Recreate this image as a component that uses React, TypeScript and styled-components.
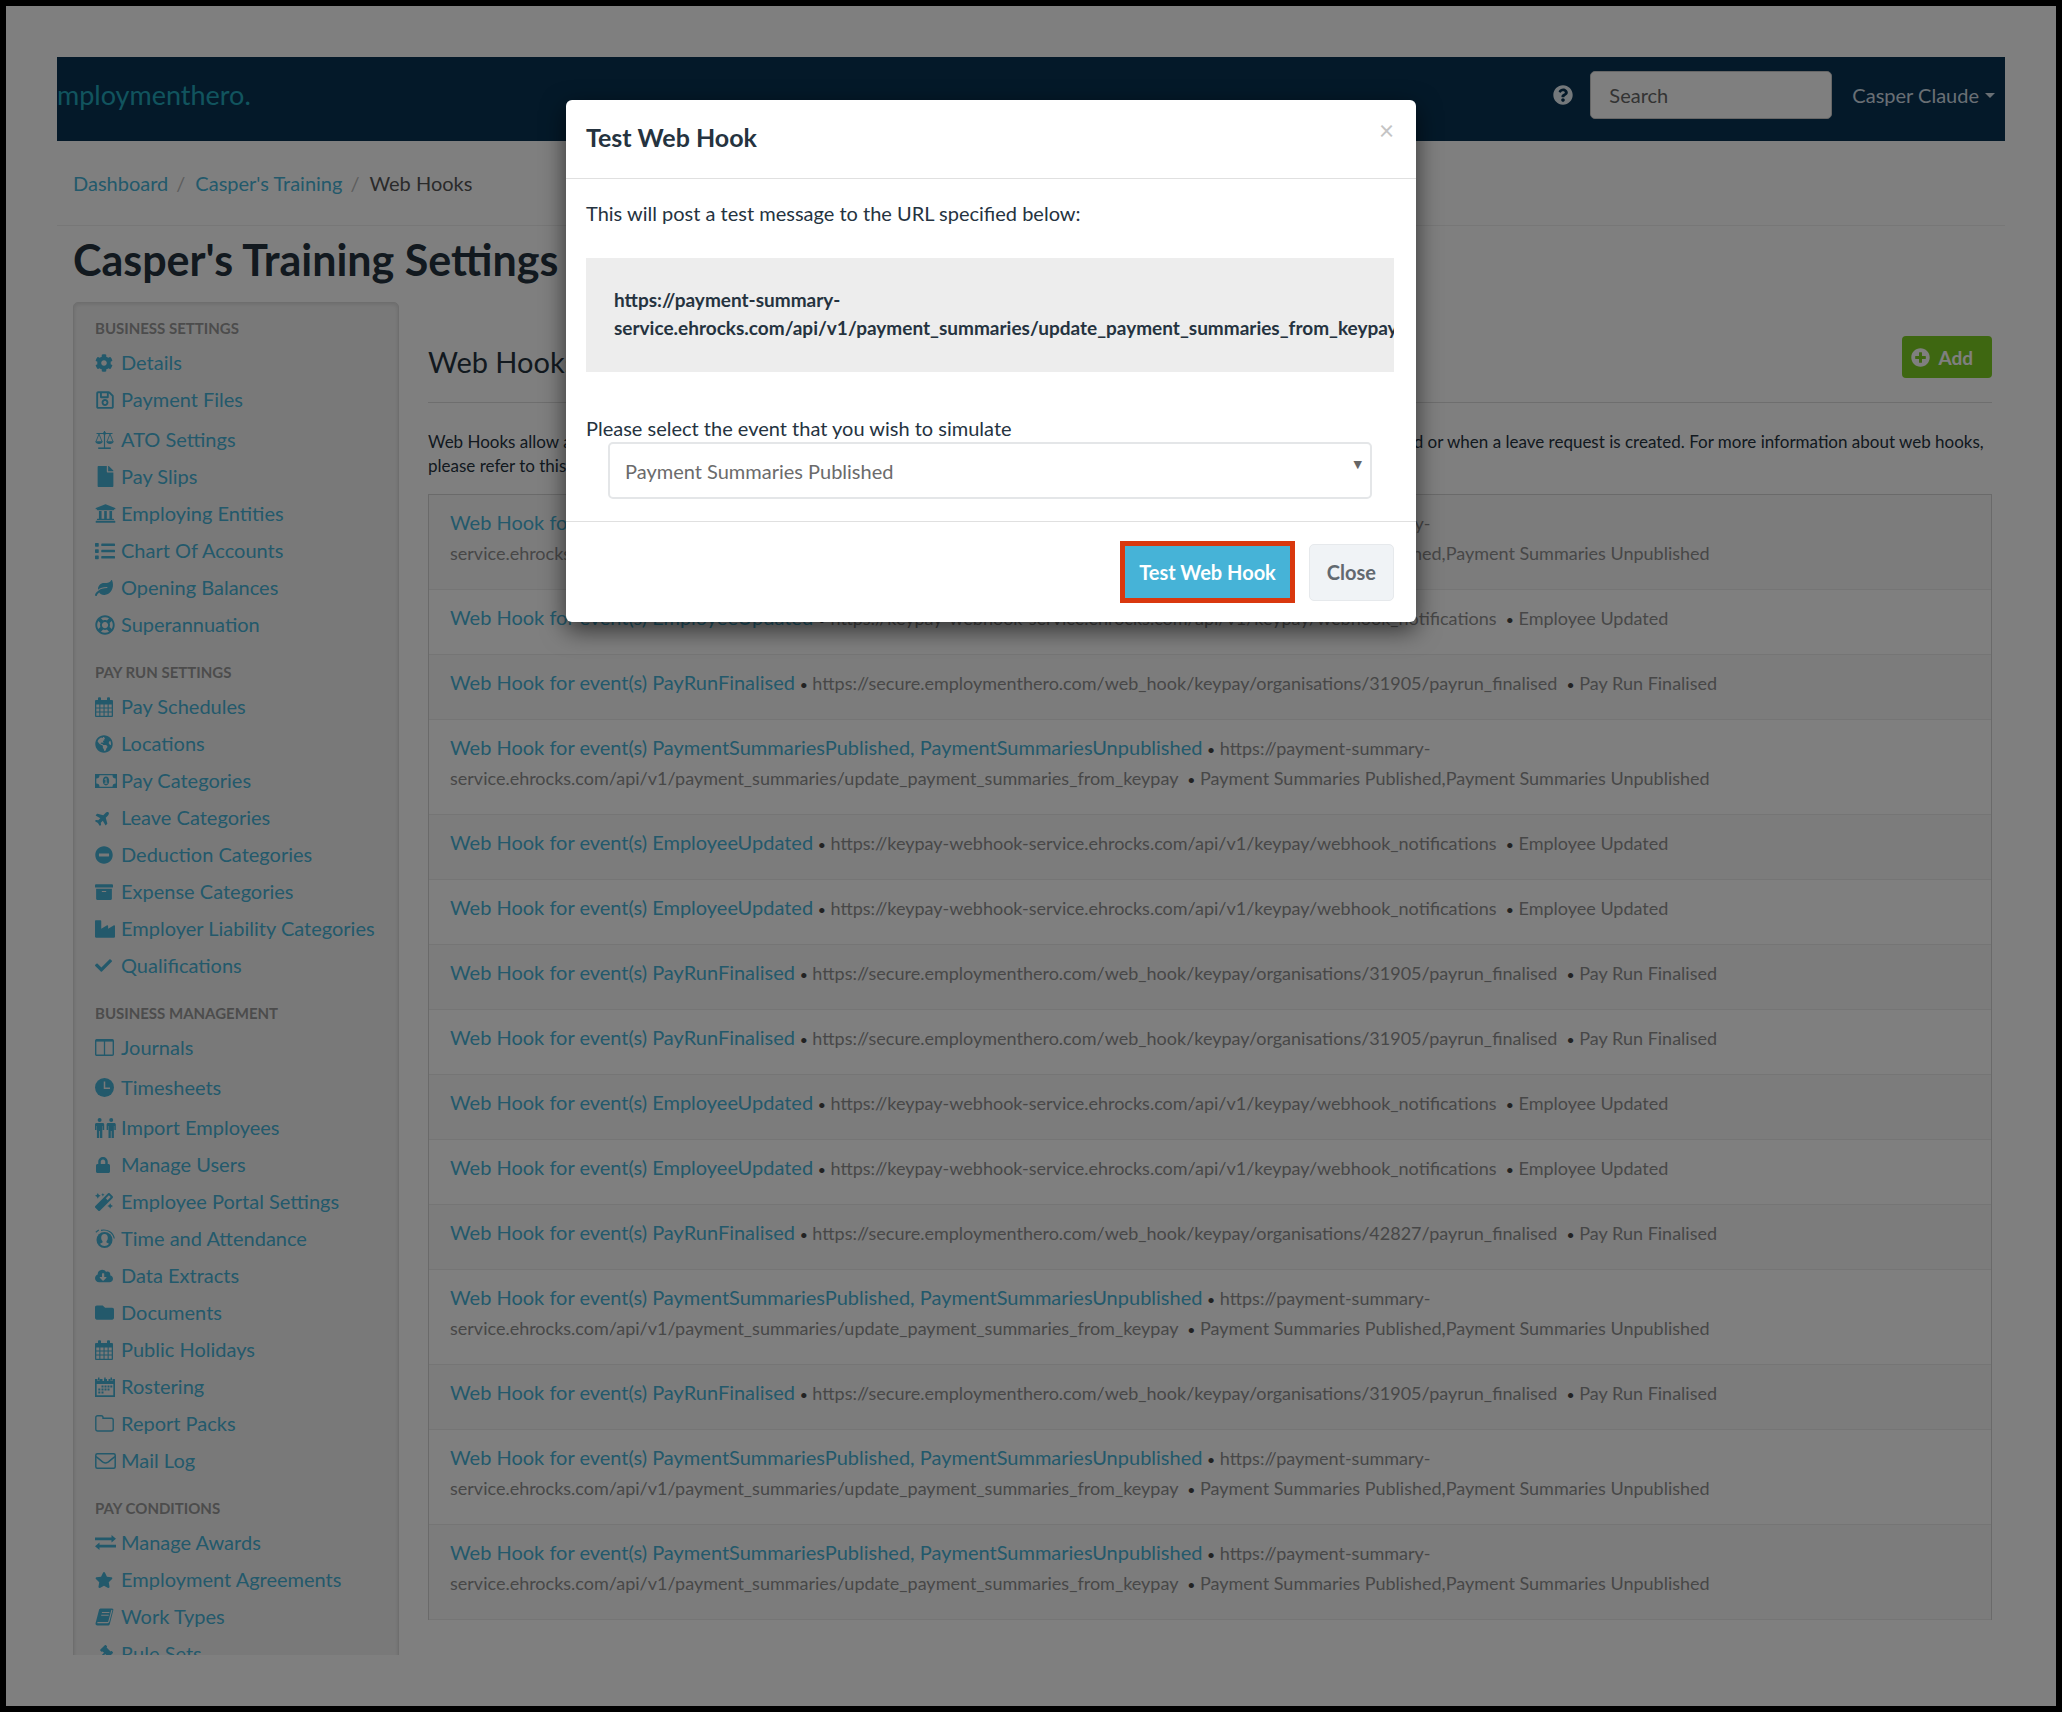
import React from "react";
import styled, { createGlobalStyle, css } from "styled-components";
import {
  FaCog,
  FaRegSave,
  FaFile,
  FaUniversity,
  FaList,
  FaLeaf,
  FaRegLifeRing,
  FaGlobeAmericas,
  FaPlane,
  FaMinusCircle,
  FaArchive,
  FaIndustry,
  FaCheck,
  FaLock,
  FaMagic,
  FaCloudDownloadAlt,
  FaFolder,
  FaStar,
  FaGavel,
  FaQuestionCircle,
  FaPlusCircle,
} from "react-icons/fa";

const color = {
  link: "#46b3d7",
  navy: "#083253",
  ink: "#25333f",
  muted: "#8f8f8f",
  line: "#e0e0e0",
  soft: "#f3f3f3",
};

const Global = createGlobalStyle`
  *, *::before, *::after { box-sizing: border-box; }
  body {
    margin: 0;
    background: #000;
    color: ${color.ink};
    font-family: Lato, "Open Sans", sans-serif;
    font-size: 18px;
  }
  h1, h2, h3, p, ul, ol { margin: 0; padding: 0; }
  ul, ol { list-style: none; }
  a { color: ${color.link}; text-decoration: none; }
  button, input, select { font: inherit; }
`;

const Screen = styled.div`
  position: relative;
  height: 100vh;
  border: 6px solid #000;
  padding: 51px;
  background: #fff;
  overflow: hidden;
`;

const Page = styled.div`
  height: 100%;
  overflow: hidden;
`;

const TopBar = styled.header`
  display: flex;
  align-items: center;
  height: 84px;
  padding: 0 10px 8px 0;
  background: ${color.navy};
`;

const Logo = styled.a`
  margin-right: auto;
  font-size: 27px;
  line-height: 32px;
  color: #22a9bd;
`;

const HelpLink = styled.a`
  display: flex;
  margin-right: 17px;
  color: #e8f1f6;
  font-size: 20px;
`;

const SearchBox = styled.input`
  width: 242px;
  height: 48px;
  margin-right: 20px;
  padding: 0 18px;
  border: 1px solid #ccc;
  border-radius: 5px;
  background: #fff;
  color: #555;
  font-size: 20px;
  &::placeholder {
    color: #666;
    opacity: 1;
  }
`;

const UserMenu = styled.button`
  display: flex;
  align-items: center;
  gap: 6px;
  padding: 0;
  border: 0;
  background: none;
  color: #d3dfe8;
  font-size: 20px;
  line-height: 24px;
`;

const Caret = styled.span`
  border: 5px solid transparent;
  border-top-color: currentColor;
  border-bottom: 0;
`;

const Crumbs = styled.ol`
  display: flex;
  padding: 0 16px;
  border-bottom: 1px solid #eee;
  font-size: 20px;
  line-height: 84px;
  color: #555;
  li + li::before {
    content: "/";
    padding: 0 10px 0 8px;
    color: #bbb;
  }
`;

const PageTitle = styled.h1`
  padding: 10px 16px 18px;
  font-size: 43px;
  font-weight: 700;
  line-height: 48px;
`;

const Columns = styled.div`
  display: grid;
  grid-template-columns: 326px minmax(0, 1fr);
  gap: 29px;
  padding: 0 13px 0 16px;
`;

const Sidebar = styled.nav`
  padding: 10px 21px 20px;
  border: 1px solid #dcdcdc;
  border-radius: 5px;
  background: ${color.soft};
  box-shadow: inset 0 1px 4px rgba(0, 0, 0, 0.12);
`;

const Group = styled.section`
  & + & {
    margin-top: 14px;
  }
`;

const GroupTitle = styled.h3`
  font-size: 15px;
  font-weight: 700;
  line-height: 31px;
  color: #999;
  text-transform: uppercase;
`;

const NavItem = styled.a<{ $tall?: boolean }>`
  display: grid;
  grid-template-columns: 26px 1fr;
  align-items: center;
  padding-top: ${(p) => (p.$tall ? 3 : 0)}px;
  font-size: 20px;
  line-height: 37px;
  white-space: nowrap;
`;

const IconSlot = styled.span<{ $h: number; $turn?: number }>`
  display: flex;
  svg {
    width: auto;
    height: ${(p) => p.$h}px;
    ${(p) =>
      p.$turn &&
      css`
        transform: rotate(${p.$turn}deg);
      `}
  }
`;

const Main = styled.main`
  padding-top: 34px;
`;

const SectionHead = styled.div`
  display: flex;
  align-items: flex-end;
  justify-content: space-between;
  padding-bottom: 24px;
  border-bottom: 1px solid #ddd;
`;

const SectionTitle = styled.h2`
  font-size: 29px;
  font-weight: 400;
  line-height: 32px;
`;

const AddButton = styled.button`
  display: flex;
  align-items: center;
  gap: 8px;
  height: 42px;
  padding: 0 19px 0 9px;
  border: 0;
  border-radius: 4px;
  background: #7dcf22;
  color: #fff;
  font-size: 19px;
  font-weight: 700;
`;

const Intro = styled.p`
  margin: 27px 0 16px;
  font-size: 17px;
  line-height: 24px;
`;

const HookList = styled.ul`
  border: 1px solid #d4d4d4;
  border-bottom: 0;
`;

const HookRow = styled.li`
  padding: 13px 21px 21px;
  border-bottom: 1px solid #ebebeb;
  font-size: 18px;
  line-height: 30px;
  color: ${color.muted};
  &:nth-child(odd) {
    background: #f9f9f9;
  }
`;

const HookLink = styled.a`
  font-size: 20px;
  line-height: 24px;
`;

const Dot = styled.span`
  font-size: 14px;
  line-height: 16px;
  color: #444;
`;

const Backdrop = styled.div`
  position: absolute;
  inset: 0;
  display: flex;
  align-items: flex-start;
  justify-content: center;
  padding: 94px 80px 0 0;
  background: rgba(0, 0, 0, 0.5);
`;

const Modal = styled.div`
  width: 850px;
  max-width: 100%;
  border-radius: 6px;
  background: #fff;
  box-shadow: 0 8px 24px rgba(0, 0, 0, 0.6);
`;

const ModalHead = styled.div`
  display: flex;
  align-items: flex-start;
  justify-content: space-between;
  padding: 19px 22px 23px 20px;
  border-bottom: 1px solid ${color.line};
`;

const ModalTitle = styled.h2`
  font-size: 25px;
  font-weight: 700;
  line-height: 36px;
`;

const CloseX = styled.button`
  padding: 0;
  border: 0;
  background: none;
  color: #c4c4c4;
  font-size: 26px;
  line-height: 22px;
`;

const ModalBody = styled.div`
  padding: 20px 22px 22px 20px;
  border-bottom: 1px solid ${color.line};
  font-size: 20px;
  line-height: 28px;
`;

const UrlBox = styled.div`
  margin: 31px 0 42px;
  padding: 28px 0 30px 28px;
  background: #ededed;
  font-size: 19px;
  font-weight: 700;
  overflow: hidden;
`;

const FieldLabel = styled.label`
  display: block;
`;

const SelectWrap = styled.div`
  display: grid;
  margin: 0 22px;
  &::after {
    content: "▼";
    grid-area: 1 / 1;
    justify-self: end;
    padding: 9px 10px 0 0;
    font-family: "DejaVu Sans", sans-serif;
    font-size: 11px;
    color: #666;
    pointer-events: none;
  }
`;

const EventSelect = styled.select`
  grid-area: 1 / 1;
  height: 57px;
  padding: 0 15px;
  appearance: none;
  border: 2px solid #e4e6e8;
  border-radius: 5px;
  background: #fff;
  color: #6b6b6b;
`;

const ModalFoot = styled.div`
  display: flex;
  align-items: center;
  justify-content: flex-end;
  gap: 14px;
  padding: 19px 22px;
`;

const Action = styled.button<{ $primary?: boolean }>`
  font-size: 20px;
  font-weight: 700;
  line-height: 24px;
  ${(p) =>
    p.$primary
      ? css`
          height: 62px;
          padding: 0 14px;
          border: 5px solid #d9380e;
          background: #46b3d7;
          color: #fff;
        `
      : css`
          height: 57px;
          padding: 0 17px;
          border: 1px solid #e6e9ec;
          border-radius: 5px;
          background: #f0f3f6;
          color: #626970;
        `}
`;

const Scales = () => (
  <svg viewBox="0 0 19 18" fill="none" stroke="currentColor" strokeWidth="1.200">
    <path d="M9.500 0v17M1.500 2.500h16" />
    <path d="M3.200 17.200h12.600" strokeWidth="1.600" />
    <path d="M4 3L1 10.500M4 3l3 7.500M15 3l-3 7.500M15 3l3 7.500" strokeWidth=".9" />
    <path d="M.3 10.300h7.400c-.2 1.700-1.700 2.600-3.700 2.600S.5 12 .3 10.300zM11.300 10.300h7.400c-.2 1.700-1.700 2.600-3.700 2.600s-3.500-.9-3.700-2.600z" fill="currentColor" stroke="none" />
    <circle cx="9.500" cy="2.300" r="1.500" fill="currentColor" stroke="none" />
  </svg>
);

const Calendar = () => (
  <svg viewBox="0 0 18 20" fill="currentColor" fillRule="evenodd">
    <path d="M1 3h2V1.200a1 1 0 0 1 1-1h1a1 1 0 0 1 1 1V3h6V1.200a1 1 0 0 1 1-1h1a1 1 0 0 1 1 1V3h2a1 1 0 0 1 1 1v15a1 1 0 0 1-1 1H1a1 1 0 0 1-1-1V4a1 1 0 0 1 1-1zM1.300 7.500v3h3v-3zm4.100 0v3h3.100v-3zm4.200 0v3h3v-3zm4.100 0v3h3v-3zM1.300 11.500v3h3v-3zm4.100 0v3h3.100v-3zm4.200 0v3h3v-3zm4.100 0v3h3v-3zM1.300 15.600v3.100h3v-3.100zm4.100 0v3.100h3.100v-3.100zm4.200 0v3.100h3v-3.100zm4.100 0v3.100h3v-3.100z" />
  </svg>
);

const Roster = () => (
  <svg viewBox="0 0 20 20" fill="currentColor" fillRule="evenodd">
    <path d="M0 2h2.500v2h2V2h3v2h1.500V2h3v2h1.500V2h2v2h2V2H20v18H0zM1.700 7v11.300h16.600V7z" />
    <path d="M3 .5h1.500v3H3zM9.200.5h1.500v3H9.200zM15.500.5H17v3h-1.500zM6.500 8.500h2v2h-2zM9.500 8.500h2v2h-2zM12.500 8.500h2v2h-2zM15.300 8.500h2v2h-2zM3.300 11.500h2v2h-2zM6.500 11.500h2v2h-2zM9.500 11.500h2v2h-2zM12.500 11.500h2v2h-2zM3.300 14.500h2v2h-2zM6.500 14.500h2v2h-2z" />
  </svg>
);

const Money = () => (
  <svg viewBox="0 0 22 14" fill="currentColor" fillRule="evenodd">
    <path d="M0 0h22v14H0zM4.500 1.300A3.200 3.200 0 0 1 1.300 4.500v5a3.200 3.200 0 0 1 3.200 3.200h13a3.200 3.200 0 0 1 3.200-3.200v-5a3.200 3.200 0 0 1-3.200-3.200z" />
    <path d="M11 2.600c2 0 3.200 2 3.200 4.400s-1.200 4.400-3.200 4.400S7.800 9.400 7.800 7 9 2.600 11 2.600zM9.300 5.300l.6.700.6-.4v3.200h-1v1h3v-1h-.9V4.200h-.9z" />
  </svg>
);

const Panels = () => (
  <svg viewBox="0 0 19 17" fill="none" stroke="currentColor">
    <rect x=".7" y=".7" width="17.600" height="15.600" rx="1" strokeWidth="1.400" />
    <path d="M1 1.500h17" strokeWidth="2.200" />
    <path d="M9.500 2v14" strokeWidth="1.300" />
  </svg>
);

const Clock = () => (
  <svg viewBox="0 0 19 19">
    <circle cx="9.500" cy="9.500" r="9.500" fill="currentColor" />
    <path d="M9.500 3.500v6.700h5.500" fill="none" stroke={color.soft} strokeWidth="1.500" />
  </svg>
);

const TwoPeople = () => (
  <svg viewBox="0 0 21 20" fill="currentColor">
    <circle cx="4.600" cy="2" r="2" />
    <path d="M1.500 5h6.200c.9 0 1.500.6 1.500 1.500V12H7.700V8h-.4v12H5v-7h-.8v7H1.900V8h-.4v4H0V6.500C0 5.600.6 5 1.500 5z" />
    <circle cx="16.200" cy="2" r="2" />
    <path d="M13.100 5h6.200c.9 0 1.500.6 1.500 1.500V12h-1.500V8h-.4v12h-2.300v-7h-.8v7h-2.300V8h-.4v4h-1.500V6.500c0-.9.600-1.500 1.500-1.500z" />
  </svg>
);

const TimePerson = () => (
  <svg viewBox="0 0 20 20">
    <circle cx="9.500" cy="11" r="8" fill="currentColor" />
    <path d="M9.500 5c2.200 0 3.300 1.500 3.300 3.700 0 1.500-.5 2.700-1.300 3.400v1.500l2.500 1.200c-1.200 1.500-2.700 2.200-4.500 2.200s-3.300-.7-4.500-2.200l2.500-1.200v-1.500c-.8-.7-1.300-1.900-1.300-3.400C6.200 6.500 7.300 5 9.500 5z" fill={color.soft} />
    <path d="M.8 3.200l3-2.200M6 1.300C12 0 18 3 19.300 9.500" fill="none" stroke="currentColor" strokeWidth="1.200" />
  </svg>
);

const FolderOutline = () => (
  <svg viewBox="0 0 19 17" fill="none" stroke="currentColor" strokeWidth="1.400">
    <path d="M.8 2.600c0-1 .8-1.800 1.800-1.800h3.600C7.200.8 8 1.600 8 2.600v.6h8.400c1 0 1.800.8 1.800 1.800v9.200c0 1-.8 1.800-1.800 1.800H2.600c-1 0-1.800-.8-1.800-1.800z" />
  </svg>
);

const EnvelopeOutline = () => (
  <svg viewBox="0 0 21 16" fill="none" stroke="currentColor" strokeWidth="1.500">
    <rect x=".8" y=".8" width="19.400" height="14.400" rx="1.500" />
    <path d="M1 3.500c3 2.500 5 4 7 5.600 1.600 1.200 3.400 1.200 5 0 2-1.600 4-3.100 7-5.600" />
  </svg>
);

const Exchange = () => (
  <svg viewBox="0 0 21 15" fill="currentColor">
    <path d="M0 2.400h16.500V0L21 3.800l-4.500 3.800V5.200H0zM21 9.800H4.500V7.400L0 11.200 4.500 15v-2.400H21z" />
  </svg>
);

const Book = () => (
  <svg viewBox="0 0 19 18">
    <path d="M6 .5h11c1 0 1.600.8 1.300 1.800L14.800 16c-.3 1-1 1.500-2 1.500H2.500C1 17.500.2 16.200.6 15L4 2C4.300 1 5 .5 6 .5z" fill="currentColor" />
    <path d="M6.900 4.500h7.500M6.200 7.200h7.500M2.400 14.600h10.100c.7 0 1.100-.3 1.300-1L16.900 2" fill="none" stroke={color.soft} strokeWidth="1.100" />
  </svg>
);

type Item = {
  label: string;
  icon: React.ReactNode;
  h?: number;
  turn?: number;
  tall?: boolean;
};

const groups: { title: string; items: Item[] }[] = [
  {
    title: "Business Settings",
    items: [
      { label: "Details", icon: <FaCog /> },
      { label: "Payment Files", icon: <FaRegSave />, h: 20 },
      { label: "ATO Settings", icon: <Scales />, h: 18, tall: true },
      { label: "Pay Slips", icon: <FaFile />, h: 21 },
      { label: "Employing Entities", icon: <FaUniversity />, h: 21 },
      { label: "Chart Of Accounts", icon: <FaList />, h: 20 },
      { label: "Opening Balances", icon: <FaLeaf /> },
      { label: "Superannuation", icon: <FaRegLifeRing />, h: 20 },
    ],
  },
  {
    title: "Pay Run Settings",
    items: [
      { label: "Pay Schedules", icon: <Calendar />, h: 20 },
      { label: "Locations", icon: <FaGlobeAmericas /> },
      { label: "Pay Categories", icon: <Money />, h: 14 },
      { label: "Leave Categories", icon: <FaPlane />, h: 16, turn: -45 },
      { label: "Deduction Categories", icon: <FaMinusCircle /> },
      { label: "Expense Categories", icon: <FaArchive /> },
      { label: "Employer Liability Categories", icon: <FaIndustry />, h: 20 },
      { label: "Qualifications", icon: <FaCheck />, h: 17 },
    ],
  },
  {
    title: "Business Management",
    items: [
      { label: "Journals", icon: <Panels />, h: 17 },
      { label: "Timesheets", icon: <Clock />, h: 19, tall: true },
      { label: "Import Employees", icon: <TwoPeople />, h: 20, tall: true },
      { label: "Manage Users", icon: <FaLock />, h: 16 },
      { label: "Employee Portal Settings", icon: <FaMagic /> },
      { label: "Time and Attendance", icon: <TimePerson />, h: 20 },
      { label: "Data Extracts", icon: <FaCloudDownloadAlt />, h: 18 },
      { label: "Documents", icon: <FaFolder />, h: 19 },
      { label: "Public Holidays", icon: <Calendar />, h: 20 },
      { label: "Rostering", icon: <Roster />, h: 20 },
      { label: "Report Packs", icon: <FolderOutline />, h: 17 },
      { label: "Mail Log", icon: <EnvelopeOutline />, h: 16 },
    ],
  },
  {
    title: "Pay Conditions",
    items: [
      { label: "Manage Awards", icon: <Exchange />, h: 15 },
      { label: "Employment Agreements", icon: <FaStar />, h: 18 },
      { label: "Work Types", icon: <Book />, h: 18 },
      { label: "Rule Sets", icon: <FaGavel /> },
    ],
  },
];

/* A url is kept in parts: the line may break between them. */
type Hook = { events: string; url: string[]; names: string };

const summaries: Hook = {
  events: "PaymentSummariesPublished, PaymentSummariesUnpublished",
  url: [
    "https://payment-summary-",
    "service.ehrocks.com/api/v1/payment_summaries/update_payment_summaries_from_keypay",
  ],
  names: "Payment Summaries Published,Payment Summaries Unpublished",
};

const employee: Hook = {
  events: "EmployeeUpdated",
  url: ["https://keypay-webhook-service.ehrocks.com/api/v1/keypay/webhook_notifications"],
  names: "Employee Updated",
};

const payRun = (organisation: number): Hook => ({
  events: "PayRunFinalised",
  url: [`https://secure.employmenthero.com/web_hook/keypay/organisations/${organisation}/payrun_finalised`],
  names: "Pay Run Finalised",
});

const hooks: Hook[] = [
  summaries,
  employee,
  payRun(31905),
  summaries,
  employee,
  employee,
  payRun(31905),
  payRun(31905),
  employee,
  employee,
  payRun(42827),
  summaries,
  payRun(31905),
  summaries,
  summaries,
];

const Url = ({ parts }: { parts: string[] }) => (
  <>
    {parts.map((part, i) => (
      <React.Fragment key={i}>
        {i > 0 && <wbr />}
        <span>{part}</span>
      </React.Fragment>
    ))}
  </>
);

export default function App() {
  return (
    <Screen>
      <Global />
      <Page>
        <TopBar>
          <Logo href="#">mploymenthero.</Logo>
          <HelpLink href="#" aria-label="Help">
            <FaQuestionCircle />
          </HelpLink>
          <SearchBox type="search" placeholder="Search" aria-label="Search" />
          <UserMenu type="button">
            Casper Claude
            <Caret />
          </UserMenu>
        </TopBar>
        <Crumbs>
          <li>
            <a href="#">Dashboard</a>
          </li>
          <li>
            <a href="#">Casper's Training</a>
          </li>
          <li>Web Hooks</li>
        </Crumbs>
        <PageTitle>Casper's Training Settings</PageTitle>
        <Columns>
          <Sidebar aria-label="Settings">
            {groups.map((group) => (
              <Group key={group.title}>
                <GroupTitle>{group.title}</GroupTitle>
                {group.items.map((item) => (
                  <NavItem key={item.label} href="#" $tall={item.tall}>
                    <IconSlot $h={item.h ?? 18} $turn={item.turn}>
                      {item.icon}
                    </IconSlot>
                    {item.label}
                  </NavItem>
                ))}
              </Group>
            ))}
          </Sidebar>
          <Main>
            <SectionHead>
              <SectionTitle>Web Hooks</SectionTitle>
              <AddButton type="button">
                <FaPlusCircle />
                Add
              </AddButton>
            </SectionHead>
            <Intro>
              Web Hooks allow an external application to be alerted when events arise in the payroll system, for
              example when a pay run is finalised or when a leave request is created. For more information about web
              hooks, please refer to this article.
            </Intro>
            <HookList>
              {hooks.map((hook, i) => (
                <HookRow key={i}>
                  <HookLink href="#">Web Hook for event(s) {hook.events}</HookLink> <Dot>•</Dot>{" "}
                  <Url parts={hook.url} /> &nbsp;<Dot>•</Dot> <span>{hook.names}</span>
                </HookRow>
              ))}
            </HookList>
          </Main>
        </Columns>
      </Page>
      <Backdrop>
        <Modal role="dialog" aria-modal="true" aria-labelledby="hook-title">
          <ModalHead>
            <ModalTitle id="hook-title">Test Web Hook</ModalTitle>
            <CloseX type="button" aria-label="Dismiss">
              ×
            </CloseX>
          </ModalHead>
          <ModalBody>
            <p>This will post a test message to the URL specified below:</p>
            <UrlBox>
              <Url parts={summaries.url} />
            </UrlBox>
            <FieldLabel htmlFor="event">Please select the event that you wish to simulate</FieldLabel>
            <SelectWrap>
              <EventSelect id="event" defaultValue="published">
                <option value="published">Payment Summaries Published</option>
                <option value="unpublished">Payment Summaries Unpublished</option>
              </EventSelect>
            </SelectWrap>
          </ModalBody>
          <ModalFoot>
            <Action type="button" $primary>
              Test Web Hook
            </Action>
            <Action type="button">Close</Action>
          </ModalFoot>
        </Modal>
      </Backdrop>
    </Screen>
  );
}
